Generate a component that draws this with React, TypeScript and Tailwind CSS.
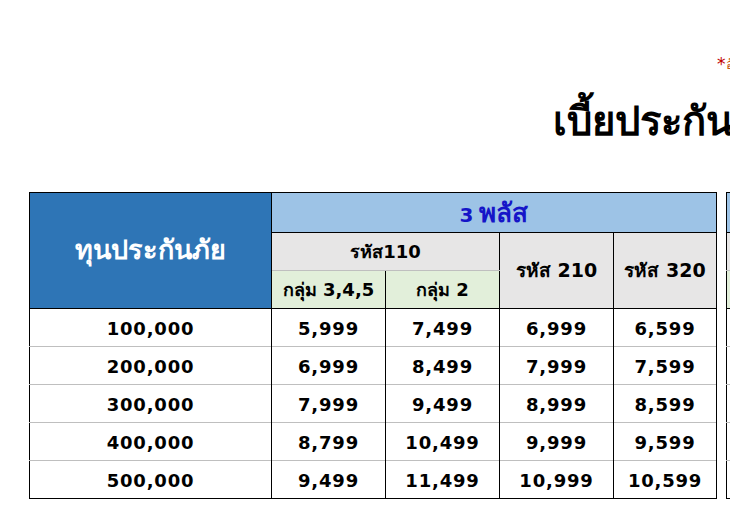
const rows: [string, string, string, string, string][] = [
  ["100,000", "5,999", "7,499", "6,999", "6,599"],
  ["200,000", "6,999", "8,499", "7,999", "7,599"],
  ["300,000", "7,999", "9,499", "8,999", "8,599"],
  ["400,000", "8,799", "10,499", "9,999", "9,599"],
  ["500,000", "9,499", "11,499", "10,999", "10,599"],
];

const font = "[font-family:Tahoma,'DejaVu_Sans','Noto_Sans',sans-serif]";

function PriceTable() {
  return (
    <table className={`${font} w-[687px] shrink-0 table-fixed border-collapse border border-black font-bold text-black`}>
      <colgroup>
        <col className="w-[242px]" />
        <col className="w-[114px]" />
        <col className="w-[114px]" />
        <col className="w-[114px]" />
        <col className="w-[103px]" />
      </colgroup>
      <thead>
        <tr className="h-[40px]">
          <th
            rowSpan={3}
            className="border border-black bg-[#2e75b6] text-[27px] font-bold text-white"
          >
            ทุนประกันภัย
          </th>
          <th colSpan={4} className="border border-black bg-[#9dc3e6] text-[26px] leading-none text-[#1515c8]">
            <span className="mr-[6px] text-[20px]">3</span>พลัส
          </th>
        </tr>
        <tr className="h-[38px]">
          <th colSpan={2} className="border-r border-b border-r-black border-b-[#bfbfbf] bg-[#e7e6e6] text-[18px]">
            รหัส110
          </th>
          <th rowSpan={2} className="border border-black bg-[#e7e6e6] text-[19px]">
            รหัส 210
          </th>
          <th rowSpan={2} className="border border-black bg-[#e7e6e6] text-[19px]">
            รหัส 320
          </th>
        </tr>
        <tr className="h-[38px]">
          <th className="border-r border-b border-black bg-[#e2efda] text-[18px]">กลุ่ม 3,4,5</th>
          <th className="border-r border-b border-black bg-[#e2efda] text-[18px]">กลุ่ม 2</th>
        </tr>
      </thead>
      <tbody>
        {rows.map((r) => (
          <tr key={r[0]} className="h-[38px] border-b border-[#bfbfbf] last:border-black">
            {r.map((v, i) => (
              <td key={i} className="border-r border-black pt-[2px] text-center text-[18px] tracking-[0.8px]">
                {v}
              </td>
            ))}
          </tr>
        ))}
      </tbody>
    </table>
  );
}

function NextTable() {
  return (
    <table className="w-[40px] shrink-0 table-fixed border-collapse border border-black">
      <tbody>
        <tr className="h-[40px]">
          <td className="border-b border-black bg-[#9dc3e6]" />
        </tr>
        <tr className="h-[38px]">
          <td className="border-b border-[#bfbfbf] bg-[#e7e6e6]" />
        </tr>
        <tr className="h-[38px]">
          <td className="border-b border-black bg-[#e2efda]" />
        </tr>
        {rows.map((r) => (
          <tr key={r[0]} className="h-[38px] border-b border-[#bfbfbf] last:border-black">
            <td className="bg-white" />
          </tr>
        ))}
      </tbody>
    </table>
  );
}

export default function App() {
  return (
    <div className="h-[525px] w-[730px] overflow-hidden bg-white">
      <div className="flex h-[74px] items-end whitespace-nowrap pl-[717px] [font-family:Tahoma,'DejaVu_Sans',sans-serif]">
        <span className="text-[17px] leading-[20px] text-[#c00000]">*</span>
        <span className="text-[14px] leading-[20px] text-[#c55a11]">อัตราเบี้ย</span>
      </div>
      <h1 className="ml-[553px] mt-[21px] whitespace-nowrap text-[40px] font-bold leading-[52px] text-black [font-family:Tahoma,'DejaVu_Sans',sans-serif]">
        เบี้ยประกันภัย
      </h1>
      <div className="mt-[45px] flex items-start gap-[9px] pl-[29px]">
        <PriceTable />
        <NextTable />
      </div>
    </div>
  );
}
